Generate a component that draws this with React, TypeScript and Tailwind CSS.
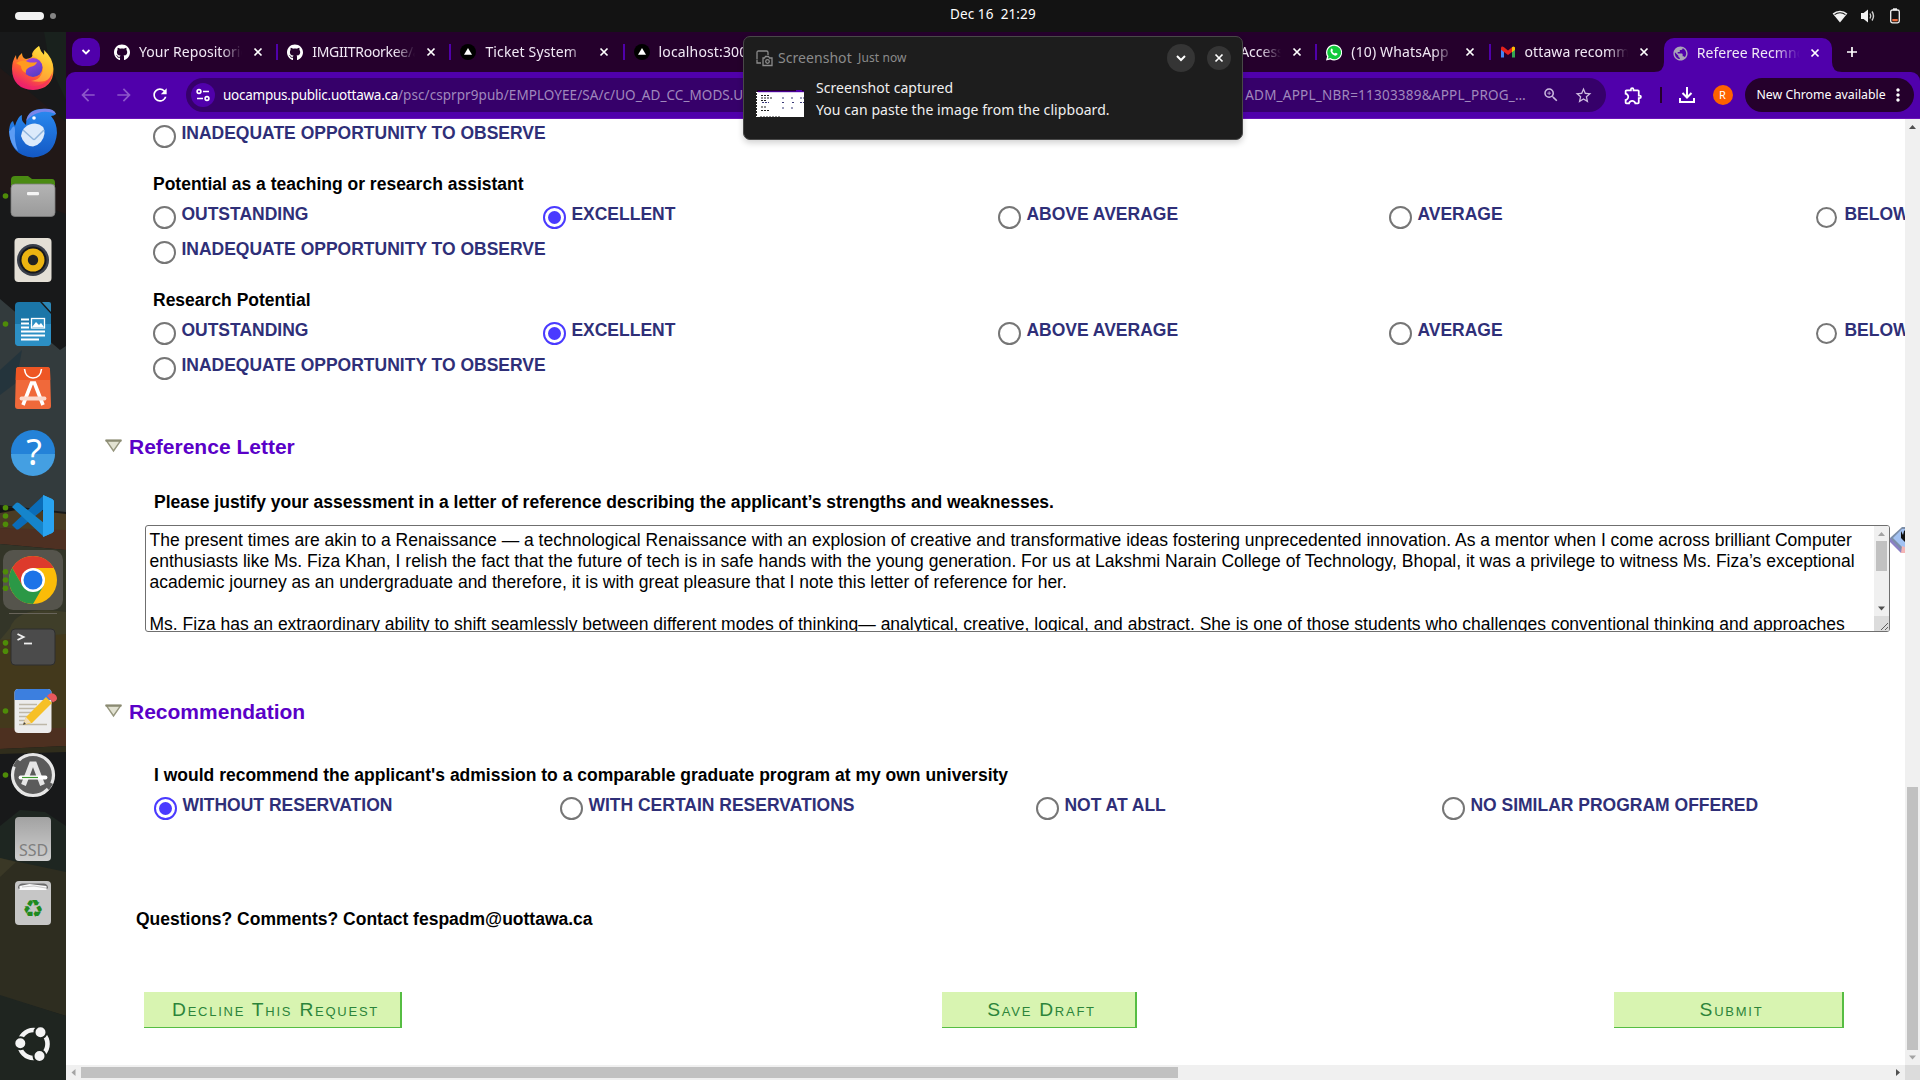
import React from 'react';
import { FaGithub } from 'react-icons/fa';
import { MdArrowBack, MdArrowForward, MdRefresh, MdOutlineExtension, MdZoomIn, MdStarBorder, MdMoreVert, MdPublic } from 'react-icons/md';

/* ---------- system top bar ---------- */

function TopBar() {
  return (
    <header className="grid h-8 shrink-0 grid-cols-[950px_1fr_auto] items-center bg-[#131313] text-white">
      <div className="flex items-center gap-1.5 pl-[15px]">
        <span className="h-2 w-[29px] rounded-full bg-[#f2f2f2]" />
        <span className="size-1.5 rounded-full bg-[#858585]" />
      </div>
      <span className="whitespace-pre text-[13.5px] leading-none tracking-[0.1px] -mt-0.5">Dec 16  21:29</span>
      <div className="flex items-center gap-3 pr-[18px]">
        <svg width="16" height="16" viewBox="0 0 16 16">
          <path d="M8 14.5 .6 5.6a11.2 11.2 0 0 1 14.8 0Z" fill="#f2f2f2" />
          <path d="M2.6 6.6a8.6 8.6 0 0 1 10.8 0" stroke="#131313" strokeWidth="1.1" fill="none" />
        </svg>
        <svg width="16" height="16" viewBox="0 0 16 16">
          <path d="M1 5h2.6L8 1.5v13L3.600 11H1Z" fill="#f2f2f2" />
          <path d="M10 5.500q1.500 2.500 0 5M12 3.500q3 4.500 0 9" stroke="#d0d0d0" strokeWidth="1.400" fill="none" />
        </svg>
        <svg width="14" height="16" viewBox="0 0 14 16">
          <rect x="2.700" y="2" width="8.600" height="12.800" rx="1.800" stroke="#f2f2f2" strokeWidth="1.300" fill="none" />
          <rect x="5" y="0.300" width="4" height="2" fill="#f2f2f2" />
          <rect x="4.300" y="11" width="5.400" height="2.300" fill="#ed6a3a" />
        </svg>
      </div>
    </header>
  );
}

/* ---------- dock ---------- */

function DockItem({ dots = 0, active = false, children }: { dots?: number; active?: boolean; children: React.ReactNode }) {
  return (
    <li className="relative flex h-16 w-full items-center justify-center">
      {active && <span className="absolute inset-x-[3px] inset-y-0.5 rounded-[10px] bg-[#55544c]" />}
      <svg width="66" height="64" viewBox="0 0 66 64" className="relative">
        {Array.from({ length: dots }, (_, i) => (
          <circle key={i} cx="5.500" cy={32 - (dots - 1) * 4.150 + i * 8.300} r="2.800" fill="#4e8c08" />
        ))}
        {children}
      </svg>
    </li>
  );
}

function DockBackdrop() {
  return (
    <svg className="absolute inset-0" width="66" height="1048" viewBox="0 32 66 1048" preserveAspectRatio="none">
      <rect y="32" width="66" height="1048" fill="#18191a" />
      <path d="M44 32 66 32V100L50 66Z" fill="#19211d" />
      <path d="M0 68 66 122V214L0 190Z" fill="#211817" />
      <path d="M0 299 60 350 66 346V512L0 505Z" fill="#333b3d" />
      <path d="M0 370 22 350 16 383 0 395Z" fill="#24343c" />
      <path d="M0 506 66 514V534L0 528Z" fill="#4a3c24" />
      <path d="M0 506 22 509 0 513Z" fill="#151515" />
      <path d="M0 528 66 530V550L0 544Z" fill="#4e3022" />
      <path d="M0 544 66 550V640H0Z" fill="#333528" />
      <path d="M10 628Q18 605 66 612V640H0Z" fill="#3f3e29" />
      <path d="M0 640 66 634V728H0Z" fill="#43391c" />
      <path d="M0 728H66V746L0 749Z" fill="#4d3020" />
      <path d="M0 749 66 746V752L0 754Z" fill="#302d1c" />
      <path d="M0 826 20 810 45 812 66 826V878L0 860Z" fill="#1e2621" />
      <path d="M0 858 66 872V1016L0 996Z" fill="#2e2d20" />
      <path d="M0 858 16 862 0 877Z" fill="#3a3826" />
      <path d="M0 995 66 1016V1080H0Z" fill="#1f2520" />
    </svg>
  );
}

function Dock() {
  return (
    <nav className="relative flex w-[66px] shrink-0 flex-col justify-between">
      <DockBackdrop />
      <svg width="0" height="0" className="absolute">
        <defs>
          <linearGradient id="fx" x1="0.800" y1="0" x2="0.300" y2="1"><stop offset="0" stopColor="#fff44f" /><stop offset="0.350" stopColor="#ffa322" /><stop offset="0.650" stopColor="#ff5a36" /><stop offset="1" stopColor="#e6127a" /></linearGradient>
          <linearGradient id="fxp" x1="0" y1="0" x2="0.500" y2="1"><stop offset="0" stopColor="#b044e0" /><stop offset="1" stopColor="#5a3ec8" /></linearGradient>
          <linearGradient id="tb" x1="0" y1="0" x2="0" y2="1"><stop offset="0" stopColor="#2a8af0" /><stop offset="1" stopColor="#1358c4" /></linearGradient>
          <linearGradient id="gr" x1="0" y1="0" x2="0" y2="1"><stop offset="0" stopColor="#b4b4b4" /><stop offset="1" stopColor="#9a9a9a" /></linearGradient>
          <linearGradient id="lg" x1="0" y1="0" x2="0" y2="1"><stop offset="0" stopColor="#a2a2a2" /><stop offset="1" stopColor="#cfcfcf" /></linearGradient>
        </defs>
      </svg>
      <ul className="relative flex flex-col pt-1">
        <DockItem>
          <path d="M39 10q1 5 5 9 1-3 0-5 9 8 9.500 19 0 20-20.500 21Q12.500 53 12 33q0-8 4-14 0 3 1 5 2-5 5-7 0 5 4 6 8-1 6-5 1-4 7-8Z" fill="url(#fx)" />
          <path d="M39 10q-6 5-6 10 8 3 10 12-1 12-12 13 22 4 22-13-1-10-9.500-18 1 2 .5 5-4-4-5-9Z" fill="#ffd83c" opacity=".55" />
          <circle cx="33" cy="31.500" r="9.500" fill="url(#fxp)" />
          <path d="M16 27q7-4 12-1 4 1 9 0-1 4-7 5-5 2-4 6-5-2-5-7Z" fill="#ff9a1f" />
          <path d="M12.500 36q4 14 20 14.500 15-1 20-14.500-2 17-19.500 17.500Q16 53 12.500 36Z" fill="#f02768" opacity=".6" />
        </DockItem>
        <DockItem>
          <path d="M9 30q1-8 4-9 1 4 2 5 3-10 7-11-1 5 2 8l2 2Q26 10 40 9q14-1 16 5-2 2-5 2 6 7 6 17Q55 56 33 57.500 10 56 9 30Z" fill="url(#tb)" />
          <path d="M26 21Q28 10 42 9q12-1 14 5-10-4-18-1-7 2-12 8Z" fill="#8c86ea" opacity=".8" />
          <path d="M9 31q1 14 9 20-4-10-3-20 0-7-3-3-2 4-3 3Z" fill="#5c9cf4" />
          <path d="M21 36q2-12 14-12.500 10 1 9.500 10Q43 44 33 46.500 24 46 21 36Z" fill="#dceafb" />
          <path d="m23 30 10 9q1 1 2 0l9-9" stroke="#8fb4dc" strokeWidth="1.500" fill="none" />
          <circle cx="34" cy="18" r="1.800" fill="#fff" />
        </DockItem>
        <DockItem dots={1}>
          <path d="M11 16q0-4 4-4h13l4 3h20q3 0 3 4v10H11Z" fill="#4a8a12" />
          <rect x="11" y="20" width="44" height="32.500" rx="4" fill="url(#gr)" stroke="#7d7d7d" strokeWidth=".8" />
          <rect x="27" y="28" width="12" height="3.200" rx="1" fill="#f5f5f5" />
        </DockItem>
        <DockItem>
          <rect x="14.500" y="10" width="37" height="44" rx="4" fill="#e4dfd6" />
          <circle cx="33" cy="32" r="16" fill="#3a3f4a" />
          <circle cx="33" cy="32" r="13.500" fill="#17181c" />
          <circle cx="33" cy="32" r="11.500" fill="#ecb411" />
          <circle cx="33" cy="32" r="5.200" fill="#222" />
        </DockItem>
        <DockItem dots={1}>
          <path d="M19 10h21l11 12v28q0 4-4 4H19q-4 0-4-4V14q0-4 4-4Z" fill="#1b76a8" />
          <path d="M15 32h36v18q0 4-4 4H19q-4 0-4-4Z" fill="#2c8fc4" />
          <path d="M42 10h7q2 0 2 2v8Z" fill="#2c86b5" />
          <path d="M21 27.500h8M21 31.500h8M21 35.500h8M21 39.500h24M21 43.500h24M21 47.500h18" stroke="#fff" strokeWidth="2" />
          <rect x="31.500" y="26.500" width="13" height="9.500" fill="#2c8fc4" stroke="#fff" strokeWidth="1.300" />
          <path d="m32 35 4-5 3 3 2-2 3 4Z" fill="#fff" />
        </DockItem>
        <DockItem>
          <path d="M19 11h28q3 0 3 3l1 36q0 3-3 3H18q-3 0-3-3l1-36q0-3 3-3Z" fill="#f0693a" />
          <path d="M19 11h28q3 0 3 3l.300 10H15.700L16 14q0-3 3-3Z" fill="#ee5624" />
          <path d="M24.500 13q1 9 8.500 9t8.500-9" stroke="#fff" strokeWidth="1.600" fill="none" />
          <path d="m23 49 8.500-22h3L43 49" stroke="#fff" strokeWidth="3.600" fill="none" />
          <path d="M21.500 42.500h23" stroke="#fbd9cc" strokeWidth="3.800" strokeLinecap="round" />
        </DockItem>
        <DockItem>
          <circle cx="33" cy="32" r="22" fill="#2482d8" />
          <path d="M11 34h44a22 22 0 0 1-44 0Z" fill="#449fe2" />
          <text x="34" y="45" textAnchor="middle" fontSize="36" fill="#fff" className="font-['Noto_Sans']">?</text>
        </DockItem>
        <DockItem dots={3}>
          <path d="m12 41 4 4q1 1 3 0l25-20V11Z" fill="#0a6cb8" />
          <path d="m12 23 4-4q1-1 3 0l25 20v14Z" fill="#1585cc" />
          <path d="m43 11 9 4q2 1 2 3v28q0 2-2 3l-9 4q2-1 2-4V15q0-3-2-4Z" fill="#29a3f0" />
          <path d="M43 11v42l9-4q2-1 2-3V18q0-2-2-3Z" fill="#29a3f0" />
        </DockItem>
        <DockItem active dots={3}>
          <circle cx="33" cy="32" r="24" fill="#fbbc08" />
          <path d="M33 20h20.800A24 24 0 0 0 12.200 20L22.600 38Z" fill="#dd3a2c" />
          <path d="M12.200 20a24 24 0 0 0 20.800 36L43.400 38H22.600Z" fill="#2b9846" />
          <circle cx="33" cy="32" r="12" fill="#fff" />
          <circle cx="33" cy="32" r="9.500" fill="#1c73e8" />
        </DockItem>
        <li className="mx-[9px] h-[3px] pt-px"><div className="h-px bg-[#68645a]" /></li>
        <DockItem dots={2}>
          <rect x="11" y="14" width="44" height="36" rx="4" fill="#4b4b4b" stroke="#2e2e2e" />
          <path d="m17.500 19 6 3-6 3" stroke="#eee" strokeWidth="1.900" fill="none" />
          <path d="M24 28.500h8" stroke="#eee" strokeWidth="1.800" />
        </DockItem>
        <DockItem dots={1}>
          <rect x="14.500" y="10" width="37" height="44" rx="4" fill="#ececec" />
          <path d="M14.500 21v-7q0-4 4-4h29q4 0 4 4v7Z" fill="#3c7fdf" />
          <path d="M19 25.500h18M19 29.500h18M19 33.500h14M19 37.500h12M19 41.500h9M19 45.500h28" stroke="#bdb7a8" strokeWidth="1.500" />
          <path d="m23 46 3-8 20-20 6 6-20 20Z" fill="#f6c026" />
          <path d="m23 46 3-8 5 5.500Z" fill="#efdcb8" />
          <path d="m23 46 1-3 2 2Z" fill="#444" />
          <path d="m47 17 2-2q4-2 7 1.500 2 3 0 5l-3 2Z" fill="#e8585c" />
        </DockItem>
        <DockItem dots={1}>
          <circle cx="33" cy="32" r="20.500" fill="#5b5b5b" stroke="#e6e6e6" strokeWidth="3.200" />
          <path d="m13 23 4-7 4 3-4 6ZM53 41l-4 6-3-3 3-5Z" fill="#5b5b5b" />
          <path d="m23.500 42 8-21h3l8 21" stroke="#e6e6e6" strokeWidth="5" fill="none" />
          <path d="M20.500 34.500h25" stroke="#fff" strokeWidth="3.800" strokeLinecap="round" />
          <path d="M22 34.500h16" stroke="#3f9a2f" strokeWidth="1.200" />
        </DockItem>
        <DockItem>
          <rect x="15" y="10" width="36" height="44" rx="4" fill="url(#lg)" />
          <text x="19" y="49" fontSize="16" fill="#7e7e7e" className="font-['Noto_Sans']">SSD</text>
        </DockItem>
        <DockItem>
          <rect x="15" y="10" width="36" height="44" rx="4" fill="#c6c6c6" />
          <path d="M18 17q0-4 4-4.500h22q4 .5 4 4.500l-1 1H19Z" fill="#6a6a6a" />
          <path d="M19.500 19v-4l10-2 17 2v4Z" fill="#fafafa" />
          <path d="m22 16 12-1 12 2" stroke="#c8c8c8" fill="none" />
          <text x="33" y="45.500" textAnchor="middle" fontSize="24" fill="#1f8a1f" className="font-['DejaVu_Sans']">♻</text>
        </DockItem>
      </ul>
      <div className="relative flex justify-center pb-[18px]">
        <svg width="36" height="36" viewBox="0 0 36 36">
          <circle cx="18.500" cy="18" r="14" stroke="#f4f4f4" strokeWidth="4.600" fill="none" />
          {[[5.300, 17.200], [25.500, 6.200], [24.500, 30]].map(([x, y]) => (
            <circle key={x} cx={x} cy={y} r="6" fill="#f4f4f4" stroke="#1f2520" strokeWidth="2" />
          ))}
        </svg>
      </div>
    </nav>
  );
}

/* ---------- browser chrome ---------- */

function CloseX({ className = '' }: { className?: string }) {
  return (
    <svg width="10" height="10" viewBox="0 0 10 10" className={'shrink-0 ' + className}>
      <path d="m1.500 1.500 7 7m0-7-7 7" stroke="#fff" strokeWidth="1.700" />
    </svg>
  );
}

const VercelIcon = (
  <svg width="16" height="16" viewBox="0 0 16 16"><circle cx="8" cy="8" r="8" fill="#000" /><path d="m8 4 4 6.800H4Z" fill="#fff" /></svg>
);
const WhatsAppIcon = (
  <svg width="17" height="17" viewBox="0 0 16 16">
    <path d="M8 0a8 8 0 1 1-3.800 15L0 16l1.100-4A8 8 0 0 1 8 0Z" fill="#fff" />
    <path d="M8 1.200A6.800 6.800 0 1 1 4.400 13.600L1.800 14.300l.7-2.500A6.800 6.800 0 0 1 8 1.200Z" fill="#12c93c" />
    <path d="M5.200 4.200q.8-.6 1.200.4l.5 1.200-.6 1q.8 1.600 2.500 2.300l.9-.9 1.600.8q.4.3.1 1-1 1.600-2.900 1Q5.400 9.800 4.600 6.900q-.3-1.700.6-2.700Z" fill="#fff" />
  </svg>
);
const GmailIcon = (
  <svg width="16" height="16" viewBox="0 0 16 16">
    <path d="M1 4v9.500h3V7Z" fill="#4285f4" /><path d="M15 4v9.500h-3V7Z" fill="#34a853" />
    <path d="M12 4.500V8l3-2.300V4q-1.300-2-3 .5Z" fill="#fbbc04" /><path d="M1 4q.3-2.300 3-.8L8 6.400l4-3.200V8l-4 3-4-3-3-2.300Z" fill="#e8221c" />
    <path d="m12 3.200 1.200-.8Q15 2.500 15 4v1.700L12 8Z" fill="#fbbc04" />
  </svg>
);

type Tab = { title: string; icon: React.ReactNode; text?: string };
const github = <FaGithub size={17} className="text-white" />;
const tabs: Tab[] = [
  { title: 'Your Repositories', icon: github, text: 'tracking-[0.05px]' },
  { title: 'IMGIITRoorkee/apps', icon: github, text: 'tracking-[-0.3px]' },
  { title: 'Ticket System', icon: VercelIcon, text: 'tracking-[0.15px]' },
  { title: 'localhost:300', icon: VercelIcon, text: 'tracking-[0.15px]' },
  { title: '', icon: VercelIcon },
  { title: '', icon: VercelIcon },
  { title: 'Access', icon: VercelIcon, text: 'pl-[62px]' },
  { title: '(10) WhatsApp', icon: WhatsAppIcon, text: 'tracking-[0.15px]' },
  { title: 'ottawa recommend', icon: GmailIcon, text: 'tracking-[0.1px]' },
];

function TabStrip() {
  return (
    <div className="flex h-10 items-center bg-[#25002c] pl-1.5 text-[14px] text-[#f1e8f5]">
      <span className="flex h-7 w-7 shrink-0 items-center justify-center rounded-[10px] bg-[#5000ab]">
        <svg width="10" height="8" viewBox="0 0 10 8"><path d="m1.500 2 3.500 3.500L8.500 2" stroke="#fff" strokeWidth="1.800" fill="none" /></svg>
      </span>
      <div className="ml-[5px] flex">
        {tabs.map((t, i) => (
          <div key={i} className="flex h-10 w-[173.200px] shrink-0 items-center pl-[9px]">
            <span className="flex w-4 shrink-0 justify-center">{t.icon}</span>
            <span className={'-mt-0.5 ml-[9px] w-[103px] shrink-0 overflow-hidden whitespace-nowrap [mask-image:linear-gradient(to_right,black_80%,transparent)] ' + (t.text ?? '')}>{t.title}</span>
            <CloseX className="ml-[11px]" />
            <span className={i < 8 ? 'ml-auto h-4 w-0.5 bg-[#5000ab]' : 'hidden'} />
          </div>
        ))}
      </div>
      <div className="relative flex h-[34px] w-[168px] shrink-0 items-center self-end rounded-t-[10px] bg-[#5000ab] pl-2 pb-1">
        <svg className="absolute -left-2.5 bottom-0" width="10" height="10"><path d="M10 0v10H0Q10 10 10 0Z" fill="#5000ab" /></svg>
        <svg className="absolute -right-2.5 bottom-0" width="10" height="10"><path d="M0 0v10h10Q0 10 0 0Z" fill="#5000ab" /></svg>
        <MdPublic size={17} className="shrink-0 text-[#a9a4b8]" />
        <span className="-mt-0.5 ml-2 w-[103px] shrink-0 overflow-hidden whitespace-nowrap tracking-[0.05px] [mask-image:linear-gradient(to_right,black_75%,transparent)]">Referee Recmndations</span>
        <CloseX className="ml-[10px]" />
      </div>
      <svg className="ml-[14px] shrink-0" width="12" height="12"><path d="M6 1v10M1 6h10" stroke="#fff" strokeWidth="1.700" /></svg>
    </div>
  );
}

function Toolbar() {
  return (
    <div className="bg-[#25002c]">
      <div className="flex h-[47px] items-center rounded-t-[9px] border-b border-[#6a14b8] bg-[#5000ab] pl-3 text-white">
        <MdArrowBack size={20} className="text-[#8d57ca]" />
        <MdArrowForward size={20} className="ml-4 text-[#8d57ca]" />
        <MdRefresh size={20} className="ml-4" />
        <div className="ml-4 flex h-[34px] w-[1420px] shrink-0 items-center rounded-full bg-[#36006a] pl-[5px]">
          <span className="flex size-6 shrink-0 items-center justify-center rounded-full bg-[#5000ab]">
            <svg width="14" height="14" viewBox="0 0 14 14" fill="none" stroke="#fff" strokeWidth="1.600">
              <circle cx="3" cy="3.500" r="1.900" /><path d="M7 3.500h6M1 10.500h6" /><circle cx="11" cy="10.500" r="1.900" />
            </svg>
          </span>
          <div className="ml-2 flex w-[1303px] shrink-0 whitespace-nowrap text-[13.500px] text-[#a088bd]">
            <span className="w-[175px] shrink-0 tracking-[-0.250px] text-white">uocampus.public.uottawa.ca</span>
            <span className="tracking-[0.070px]">/psc/csprpr9pub/EMPLOYEE/SA/c/UO_AD_CC_MODS.U</span>
            <span className="ml-auto tracking-[0.230px]">ADM_APPL_NBR=11303389&amp;APPL_PROG_…</span>
          </div>
          <MdZoomIn size={18} className="ml-4 shrink-0 text-[#cdbbe0]" />
          <MdStarBorder size={19} className="ml-[14px] shrink-0 text-[#cdbbe0]" />
        </div>
        <MdOutlineExtension size={21} className="ml-[17px]" />
        <span className="ml-4 h-4 w-[1.500px] bg-[#25002c]" />
        <svg className="ml-4" width="18" height="18" viewBox="0 0 18 18" fill="none" stroke="#fff" strokeWidth="2">
          <path d="M9 1v10M4.500 7 9 11.500 13.500 7M2 12v4h14v-4" />
        </svg>
        <span className="ml-[17px] flex size-5 items-center justify-center rounded-full bg-[#ff6200] text-[11px]">R</span>
        <div className="ml-3 flex h-[34px] w-[169px] items-center rounded-full bg-[#25002c] pl-3 text-[12.300px]">
          <span className="w-[131px] whitespace-nowrap">New Chrome available</span>
          <MdMoreVert size={20} />
        </div>
      </div>
    </div>
  );
}

/* ---------- form ---------- */

function Radio({ label, checked = false, small = false }: { label: string; checked?: boolean; small?: boolean }) {
  return (
    <label className="flex h-5 items-start whitespace-nowrap font-bold text-[#2f2f78]">
      <span className="mt-0.5 flex w-[28.400px] shrink-0">
        <span className={
          'flex shrink-0 items-center justify-center rounded-full border-2 bg-white ' +
          (small ? 'mt-px size-[21px] ' : 'size-[23px] ') +
          (checked ? 'border-[#4a3aff]' : 'border-[#767676]')
        }>
          {checked && <span className="size-[13px] rounded-full bg-[#4a3aff]" />}
        </span>
      </span>
      {label}
    </label>
  );
}

function Question({ title }: { title: string }) {
  return (
    <fieldset className="ml-[87px] h-[116px]">
      <div className="h-[30px] font-bold">{title}</div>
      <div className="grid h-[35px] grid-cols-[390px_455px_391px_427px_200px]">
        <Radio label="OUTSTANDING" />
        <Radio label="EXCELLENT" checked />
        <Radio label="ABOVE AVERAGE" />
        <Radio label="AVERAGE" />
        <Radio label="BELOW AVERAGE" small />
      </div>
      <Radio label="INADEQUATE OPPORTUNITY TO OBSERVE" />
    </fieldset>
  );
}

function SectionTitle({ children, className }: { children: string; className: string }) {
  return (
    <h2 className={'ml-[39px] flex h-6 items-start text-[21px] font-bold leading-6 text-[#5a00c8] ' + className}>
      <svg className="mr-[7px] mt-1" width="17" height="14" viewBox="0 0 17 14">
        <path d="M1.500 1.800h14L8.500 12Z" fill="#e2e2d2" stroke="#96967e" strokeWidth="1.500" />
        <path d="M.5 1.500h16" stroke="#8a8a72" strokeWidth="2.200" />
      </svg>
      {children}
    </h2>
  );
}

const letter = [
  'The present times are akin to a Renaissance — a technological Renaissance with an explosion of creative and transformative ideas fostering unprecedented innovation. As a mentor when I come across brilliant Computer',
  'enthusiasts like Ms. Fiza Khan, I relish the fact that the future of tech is in safe hands with the young generation. For us at Lakshmi Narain College of Technology, Bhopal, it was a privilege to witness Ms. Fiza’s exceptional',
  'academic journey as an undergraduate and therefore, it is with great pleasure that I note this letter of reference for her.',
  '',
  'Ms. Fiza has an extraordinary ability to shift seamlessly between different modes of thinking— analytical, creative, logical, and abstract. She is one of those students who challenges conventional thinking and approaches',
];

function LetterBox() {
  return (
    <div className="ml-[79px] mt-[13px] flex h-[107px] items-start">
      <div className="flex h-full w-[1745px] shrink-0 overflow-hidden rounded-[3px] border border-[#6f6f6f] bg-white">
        <div className="w-[1728px] shrink-0 whitespace-nowrap pl-[3.500px] pt-1 leading-[21px] text-black">
          {letter.map((line, i) => <div key={i} className="h-[21px]">{line}</div>)}
        </div>
        <div className="flex w-[15px] flex-col items-center bg-[#f0f0f0]">
          <svg width="15" height="15"><path d="M4 10h7L7.500 6Z" fill="#a3a3a3" /></svg>
          <div className="h-[30px] w-[11px] bg-[#c1c1c1]" />
          <svg className="mt-auto" width="15" height="15"><path d="M4 5.500h7L7.500 9.500Z" fill="#505050" /></svg>
          <svg width="15" height="15" className="bg-[#dcdcdc]"><path d="m7 14 7-7M11 14l3-3" stroke="#606060" /></svg>
        </div>
      </div>
      <svg className="mt-px shrink-0" width="27" height="27" viewBox="0 0 27 27">
        <path d="M0 12v4l11 11h5V14Z" fill="#8a80c4" />
        <path d="M0 12 12 1h15v26H14Z" fill="#7c8ea8" />
        <path d="M3 12 12 3h15v20H14Z" fill="#a3c2f2" />
        <path d="m12 20 3 1v6h-4Z" fill="#f4b4b4" />
        <path d="m11 5 2 4 1-4 3-2v15l-3-3-3-3Z" fill="#111" />
      </svg>
    </div>
  );
}

function FormButton({ label, className }: { label: string; className: string }) {
  return (
    <button className={'h-9 border-b border-r-2 border-[#56bd43] bg-[#d8f4b1] pl-[7px] text-[19.250px] leading-none tracking-[1.750px] text-[#2c843a] [font-variant-caps:small-caps] ' + className}>
      {label}
    </button>
  );
}

function FormPage() {
  return (
    <main className="h-[946px] w-[1839px] overflow-hidden bg-white pt-1 font-['Liberation_Sans',sans-serif] text-[17.500px] leading-5 text-black">
      <div className="ml-[87px] h-[51px]"><Radio label="INADEQUATE OPPORTUNITY TO OBSERVE" /></div>
      <Question title="Potential as a teaching or research assistant" />
      <Question title="Research Potential" />

      <SectionTitle className="mt-[29px]">Reference Letter</SectionTitle>
      <p className="ml-[88px] mt-[33px] h-5 font-bold">Please justify your assessment in a letter of reference describing the applicant’s strengths and weaknesses.</p>
      <LetterBox />

      <SectionTitle className="mt-[68px]">Recommendation</SectionTitle>
      <p className="ml-[88px] mt-[41px] h-5 font-bold">I would recommend the applicant's admission to a comparable graduate program at my own university</p>
      <div className="ml-[88px] mt-[10px] grid h-5 grid-cols-[406px_476px_406px_400px]">
        <Radio label="WITHOUT RESERVATION" checked />
        <Radio label="WITH CERTAIN RESERVATIONS" />
        <Radio label="NOT AT ALL" />
        <Radio label="NO SIMILAR PROGRAM OFFERED" />
      </div>

      <p className="ml-[70px] mt-[94px] h-5 font-bold">Questions? Comments? Contact fespadm@uottawa.ca</p>
      <div className="ml-[78px] mt-[63px] flex w-[1700px] justify-between">
        <FormButton label="Decline This Request" className="w-[258px]" />
        <FormButton label="Save Draft" className="ml-[62px] w-[195px]" />
        <FormButton label="Submit" className="w-[230px]" />
      </div>
    </main>
  );
}

function Viewport() {
  return (
    <div className="flex flex-1 flex-col">
      <div className="flex h-[946px]">
        <FormPage />
        <div className="flex w-[15px] flex-col items-center bg-[#f0f0f0]">
          <svg width="15" height="15"><path d="M4 10h7L7.500 6Z" fill="#505050" /></svg>
          <div className="mt-auto h-[263px] w-[11px] bg-[#c1c1c1]" />
          <svg width="15" height="15"><path d="M4 5.500h7L7.500 9.500Z" fill="#a3a3a3" /></svg>
        </div>
      </div>
      <div className="flex h-[15px] items-center bg-[#f0f0f0]">
        <svg width="15" height="15"><path d="M9.500 4v7L5.500 7.500Z" fill="#a3a3a3" /></svg>
        <div className="h-[11px] w-[1097px] bg-[#c1c1c1]" />
        <svg className="ml-auto" width="15" height="15"><path d="M6 4v7L10 7.500Z" fill="#505050" /></svg>
        <div className="size-[15px] bg-[#dcdcdc]" />
      </div>
    </div>
  );
}

/* ---------- notification ---------- */

function Thumbnail() {
  return (
    <svg width="48" height="27" viewBox="0 0 48 27" className="bg-white">
      <rect width="48" height="2" fill="#25002c" /><rect y="1.200" x="2" width="46" height="1" fill="#5000ab" /><rect x="40" width="6" height="2" fill="#5000ab" />
      <path d="M.5 0v27" stroke="#222" strokeDasharray="2 1" />
      <g stroke="#3a3a78" strokeDasharray="2 1">
        <path d="M5 5.500h9M5 8h11M5 10.500h6M5 17h5M5 20.500h9M4 27h20" stroke="#222" />
        <path d="M6 12.500h7M26 8h3M35 8h3M44 8h4M26 12.500h3M36 12.500h3M44 12.500h4M26 18h3M35 18h3" />
      </g>
    </svg>
  );
}

function Notification() {
  return (
    <aside className="absolute left-[743px] top-[36px] flex h-[104px] w-[500px] flex-col rounded-[7px] border border-[#484848] bg-[#1d1d1d] px-3 shadow-[0_3px_6px_rgba(0,0,0,0.18)]">
      <div className="-mr-0.5 mt-[7px] flex h-7 items-center text-[#8b8b8b]">
        <svg width="17" height="17" viewBox="0 0 17 17" fill="none" stroke="#8b8b8b" strokeWidth="1.300">
          <path d="M5 13H1V9.500M1 9V2.500Q1 1 2.500 1h8Q12 1 12 2.500V5" /><path d="M7 8h1.500l1-1.500h3L13.500 8H16v7.500H7Z" /><circle cx="11.500" cy="11.500" r="1.800" />
        </svg>
        <span className="-mt-0.5 ml-[5px] w-20 text-[14px] tracking-[0.05px]">Screenshot</span>
        <span className="text-[12px] tracking-[0.1px]">Just now</span>
        <span className="ml-auto flex size-7 items-center justify-center rounded-full bg-[#353535]">
          <svg width="12" height="9" viewBox="0 0 12 9"><path d="m2 2 4 4 4-4" stroke="#fff" strokeWidth="2" fill="none" /></svg>
        </span>
        <span className="ml-3 mr-px flex size-6 items-center justify-center rounded-full bg-[#353535]"><CloseX /></span>
      </div>
      <div className="mt-[5px] flex text-[14px] leading-[22px] tracking-[0.070px] text-[#f0f0f0]">
        <span className="mr-3 mt-[13px]"><Thumbnail /></span>
        <div>
          <div>Screenshot captured</div>
          <div>You can paste the image from the clipboard.</div>
        </div>
      </div>
    </aside>
  );
}

export default function App() {
  return (
    <div className="relative flex h-[1080px] w-[1920px] flex-col overflow-hidden bg-[#131313] font-['Noto_Sans','Open_Sans',sans-serif]">
      <TopBar />
      <div className="flex flex-1">
        <Dock />
        <section className="flex w-[1854px] flex-col">
          <TabStrip />
          <Toolbar />
          <Viewport />
        </section>
      </div>
      <Notification />
    </div>
  );
}
